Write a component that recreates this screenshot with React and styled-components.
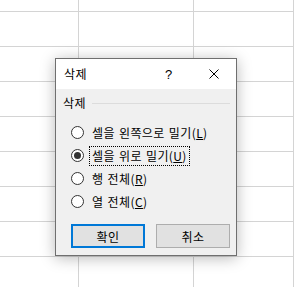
import React from 'react'
import styled, { createGlobalStyle } from 'styled-components'

const GlobalStyle = createGlobalStyle`
  html, body {
    margin: 0;
    padding: 0;
    background: #ffffff;
    overflow: hidden;
  }
  body {
    font-family: "Noto Sans CJK KR", "Noto Sans", sans-serif;
  }
`

const Sheet = styled.div`
  position: relative;
  width: 294px;
  height: 287px;
  display: grid;
  grid-template-columns: 79px 115px 1fr;
  grid-template-rows: 12px repeat(8, 35px);
  overflow: hidden;
`

const Cell = styled.div`
  border-right: 1px solid #d4d4d4;
  border-bottom: 1px solid #d4d4d4;
`

const Dialog = styled.div`
  position: absolute;
  left: 55px;
  top: 58px;
  width: 180px;
  height: 196px;
  border: 1px solid #6f6f6f;
  background: #f0f0f0;
  box-shadow: 0 2px 14px rgba(0, 0, 0, 0.28);
  display: flex;
  flex-direction: column;
  font-size: 12px;
  color: #000;
`

const TitleBar = styled.div`
  height: 30px;
  background: #ffffff;
  display: flex;
  align-items: center;
  padding-left: 8px;
`

const Title = styled.span`
  flex: 1;
  line-height: 16px;
  letter-spacing: 0.4px;
`

const Help = styled.span`
  width: 14px;
  font-family: "Liberation Sans", sans-serif;
  font-size: 13px;
  margin-right: 30px;
`

const Close = styled.div`
  width: 10px;
  height: 10px;
  margin-right: 17px;
  display: flex;
`

const Body = styled.div`
  flex: 1;
  display: flex;
  flex-direction: column;
  padding: 6px 6px 7px 7px;
`

const GroupHead = styled.div`
  display: flex;
  align-items: center;
  gap: 6px;
  line-height: 16px;
  letter-spacing: 0.4px;
`

const Rule = styled.div`
  flex: 1;
  height: 1px;
  background: #dcdcdc;
`

const Options = styled.div`
  display: flex;
  flex-direction: column;
  margin-top: 10px;
  padding-left: 8px;
`

const Option = styled.div`
  height: 23px;
  display: flex;
  align-items: center;
  gap: 5px;
`

const Radio = styled.span`
  box-sizing: border-box;
  width: 13px;
  height: 13px;
  border-radius: 50%;
  border: 1px solid #333;
  background: #fff;
  display: flex;
  align-items: center;
  justify-content: center;
  &::after {
    content: '';
    width: 7px;
    height: 7px;
    border-radius: 50%;
    background: ${p => (p.$checked ? '#333' : 'transparent')};
  }
`

const Label = styled.span`
  line-height: 16px;
  padding: 1px 2px;
  border: 1px dotted ${p => (p.$focus ? '#000' : 'transparent')};
  letter-spacing: 0.4px;
  word-spacing: 1px;
  white-space: nowrap;
`

const Buttons = styled.div`
  display: flex;
  justify-content: flex-end;
  gap: 11px;
  margin-top: auto;
`

const Button = styled.div`
  box-sizing: border-box;
  width: 74px;
  height: 24px;
  display: flex;
  align-items: center;
  justify-content: center;
  background: #e1e1e1;
  letter-spacing: 0.4px;
  border: ${p => (p.$primary ? '2px solid #0078d7' : '1px solid #adadad')};
`

const options = [
  { text: '셀을 왼쪽으로 밀기', key: 'L' },
  { text: '셀을 위로 밀기', key: 'U', checked: true },
  { text: '행 전체', key: 'R' },
  { text: '열 전체', key: 'C' },
]

export default function App() {
  const cells = []
  for (let i = 0; i < 27; i++) cells.push(<Cell key={i} />)
  return (
    <>
      <GlobalStyle />
      <Sheet>
        {cells}
        <Dialog>
          <TitleBar>
            <Title>삭제</Title>
            <Help>?</Help>
            <Close>
              <svg width="10" height="10" viewBox="0 0 10 10">
                <path d="M0.5 0.5 L9.5 9.5 M9.5 0.5 L0.5 9.5" stroke="#000" strokeWidth="1" />
              </svg>
            </Close>
          </TitleBar>
          <Body>
            <GroupHead>
              <span>삭제</span>
              <Rule />
            </GroupHead>
            <Options>
              {options.map(o => (
                <Option key={o.key}>
                  <Radio $checked={o.checked} />
                  <Label $focus={o.checked}>
                    {o.text}(<u>{o.key}</u>)
                  </Label>
                </Option>
              ))}
            </Options>
            <Buttons>
              <Button $primary>확인</Button>
              <Button>취소</Button>
            </Buttons>
          </Body>
        </Dialog>
      </Sheet>
    </>
  )
}
